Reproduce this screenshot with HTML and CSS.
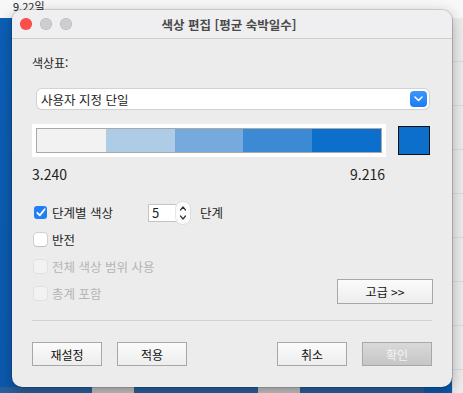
FILE: index.html
```html
<!DOCTYPE html>
<html lang="ko">
<head>
    <meta charset="UTF-8">
    <title>색상 편집</title>
    <link rel="stylesheet" href="styles.css">
</head>
<body>
    <div class="desk">
        <div class="topbar">9.22일</div>
        <div class="desk-main">
            <div class="desk-blue">
                <div class="stripes">
                    <span class="st blue" style="width:92px"></span>
                    <span class="st gray" style="width:42px"></span>
                    <span class="st blue" style="width:124px"></span>
                    <span class="st gray" style="width:42px"></span>
                    <span class="st blue" style="width:124px"></span>
                </div>
            </div>
            <div class="desk-side"></div>
        </div>
    </div>

    <!-- Edit colors window -->
    <div class="dialog">
        <div class="titlebar">
            <div class="lights">
                <span class="light red"></span>
                <span class="light"></span>
                <span class="light"></span>
            </div>
            <div class="title">색상 편집 [평균 숙박일수]</div>
        </div>

        <div class="body">
            <div class="label">색상표:</div>

            <div class="select">
                <span>사용자 지정 단일</span>
                <span class="select-btn">
                    <svg width="9" height="6" viewBox="0 0 9 6"><path d="M1 1l3.5 3.5L8 1" fill="none" stroke="#fff" stroke-width="1.6" stroke-linecap="round" stroke-linejoin="round"/></svg>
                </span>
            </div>

            <div class="ramp-row">
                <div class="ramp">
                    <div class="ramp-inner">
                        <span class="seg" style="background:#f2f2f2"></span>
                        <span class="seg" style="background:#aecce6"></span>
                        <span class="seg" style="background:#76aadd"></span>
                        <span class="seg" style="background:#3c8ad4"></span>
                        <span class="seg" style="background:#0c6fcb"></span>
                    </div>
                </div>
                <div class="swatch"></div>
            </div>

            <div class="range">
                <span>3.240</span>
                <span>9.216</span>
            </div>

            <div class="options">
                <div class="opt">
                    <span class="check on">
                        <svg width="10" height="9" viewBox="0 0 10 9"><path d="M1.3 4.8l2.5 2.6L8.7 1.3" fill="none" stroke="#fff" stroke-width="1.8" stroke-linecap="round" stroke-linejoin="round"/></svg>
                    </span>
                    <span class="opt-text">단계별 색상</span>
                    <span class="spin">
                        <span class="spin-box">5</span>
                        <span class="spin-btn">
                            <svg width="12" height="22" viewBox="0 0 12 22"><path d="M3.5 8l2.5-3 2.5 3M3.5 14l2.5 3 2.5-3" fill="none" stroke="#333" stroke-width="1.2" stroke-linecap="round" stroke-linejoin="round"/></svg>
                        </span>
                    </span>
                    <span class="opt-text">단계</span>
                </div>
                <div class="opt">
                    <span class="check"></span>
                    <span class="opt-text">반전</span>
                </div>
                <div class="opt disabled">
                    <span class="check"></span>
                    <span class="opt-text">전체 색상 범위 사용</span>
                </div>
                <div class="opt disabled last">
                    <span class="check"></span>
                    <span class="opt-text">총계 포함</span>
                    <button class="btn advanced">고급 &gt;&gt;</button>
                </div>
            </div>

            <div class="sep"></div>

            <div class="actions">
                <button class="btn">재설정</button>
                <button class="btn">적용</button>
                <span class="spacer"></span>
                <button class="btn">취소</button>
                <button class="btn off">확인</button>
            </div>
        </div>
    </div>
</body>
</html>
```

FILE: styles.css
```css
body {
    margin: 0;
    font-family: "Noto Sans CJK KR", "Noto Sans", sans-serif;
    color: #1e1e1e;
    overflow: hidden;
}

.desk {
    display: flex;
    flex-direction: column;
    width: 463px;
    height: 393px;
}

.topbar {
    height: 18px;
    background-color: #f7f7f7;
    font-size: 11px;
    line-height: 12px;
    padding-left: 13px;
    color: #222;
}

.desk-main {
    flex: 1;
    display: flex;
}

.desk-blue {
    width: 452px;
    background: linear-gradient(180deg, #0c5fb6 0%, #0c5aae 100%);
    display: flex;
    flex-direction: column;
    justify-content: flex-end;
}

.stripes {
    display: flex;
    height: 6px;
}

.st.blue {
    background-color: #2a5f9c;
}

.st.gray {
    background-color: #c4c4c4;
}

.desk-side {
    flex: 1;
    background-color: #ececec;
    background-image: repeating-linear-gradient(180deg, transparent 0, transparent 43px, #dcdcdc 43px, #dcdcdc 44px);
    border-left: 1px solid #dedede;
}

/* window */
.dialog {
    position: absolute;
    left: 12px;
    top: 10px;
    width: 440px;
    height: 377px;
    background-color: #ececec;
    border-radius: 10px;
    box-shadow: 0 0 0 1px rgba(0, 0, 0, 0.12), 0 4px 14px rgba(0, 0, 0, 0.3);
    overflow: hidden;
}

.titlebar {
    height: 28px;
    background-color: #efeef0;
    border-bottom: 1px solid #cfcfcf;
    display: flex;
    align-items: center;
    position: relative;
}

.lights {
    display: flex;
    gap: 8px;
    padding-left: 8px;
}

.light {
    width: 12px;
    height: 12px;
    border-radius: 50%;
    background-color: #cdcdcd;
    box-shadow: inset 0 0 0 0.5px rgba(0, 0, 0, 0.12);
}

.light.red {
    background-color: #fd4e49;
}

.title {
    position: absolute;
    left: 0;
    right: 0;
    text-align: center;
    font-size: 12.5px;
    font-weight: bold;
    color: #4a4a4a;
    padding-right: 6px;
}

.body {
    padding: 15px 20px 0 20px;
}

.label {
    font-size: 12px;
    height: 18px;
    line-height: 18px;
}

.select {
    margin: 17px 3px 0 5px;
    height: 20px;
    background-color: #fff;
    border-radius: 5px;
    box-shadow: 0 0 0 1px #d2d2d2, 0 1px 1px rgba(0, 0, 0, 0.08);
    display: flex;
    align-items: center;
    justify-content: space-between;
    padding: 0 2px 0 4px;
    font-size: 12.5px;
}

.select-btn {
    width: 17px;
    height: 16px;
    border-radius: 4px;
    background: linear-gradient(180deg, #3c97fc, #1c7bf5);
    display: flex;
    align-items: center;
    justify-content: center;
}

.ramp-row {
    margin-top: 15px;
    display: flex;
    align-items: center;
    gap: 12px;
}

.ramp {
    width: 354px;
    height: 33px;
    background-color: #fff;
    padding: 4px;
    box-sizing: border-box;
}

.ramp-inner {
    display: flex;
    height: 100%;
    border: 1px solid #a9a9a9;
    box-sizing: border-box;
}

.seg {
    flex: 1;
}

.swatch {
    width: 30px;
    height: 27px;
    background-color: #0c6fcb;
    border: 1px solid #111;
}

.range {
    width: 353px;
    display: flex;
    justify-content: space-between;
    font-size: 14px;
    margin-top: 7px;
    height: 20px;
    line-height: 20px;
}

.options {
    margin-top: 19px;
    display: flex;
    flex-direction: column;
    gap: 8px;
}

.opt {
    display: flex;
    align-items: center;
    height: 19px;
    font-size: 12.5px;
}

.check {
    width: 13px;
    height: 13px;
    border-radius: 3px;
    background-color: #fff;
    box-shadow: 0 0 0 0.5px #b8b8b8, 0 0.5px 1px rgba(0, 0, 0, 0.15);
    margin: 0 5px 0 2px;
    display: flex;
    align-items: center;
    justify-content: center;
}

.check.on {
    background-color: #1f80f6;
    box-shadow: none;
}

.opt.disabled {
    color: #b4b4b4;
}

.opt.disabled .check {
    background-color: #f2f2f2;
    box-shadow: 0 0 0 0.5px #d6d6d6;
}

.spin {
    display: flex;
    align-items: center;
    margin-left: 35px;
    margin-right: 10px;
}

.spin-box {
    width: 28px;
    height: 18px;
    background-color: #fff;
    border: 1px solid #c4c4c4;
    border-right: none;
    box-sizing: border-box;
    padding-left: 3px;
    line-height: 16px;
    font-size: 13px;
}

.spin-btn {
    width: 14px;
    height: 22px;
    display: flex;
    align-items: center;
    justify-content: center;
    background-color: #fbfbfb;
    border-radius: 6px;
    box-shadow: 0 0 0 0.5px #cfcfcf;
}

.btn {
    width: 70px;
    height: 24px;
    border: 1px solid #a8a8a8;
    border-radius: 0;
    background: linear-gradient(180deg, #fbfbfb, #ededed);
    font-family: inherit;
    font-size: 12px;
    color: #111;
    padding: 0;
}

.btn.advanced {
    margin-left: auto;
    margin-right: -1px;
    width: 96px;
    height: 25px;
    margin-top: -5px;
}

.btn.off {
    background: linear-gradient(180deg, #d9d9d9, #c6c6c6);
    color: #f4f4f4;
}

.sep {
    margin-top: 17px;
    height: 1px;
    background-color: #d0d0d0;
}

.actions {
    display: flex;
    gap: 15px;
    margin-top: 21px;
}

.spacer {
    flex: 1;
}
```
